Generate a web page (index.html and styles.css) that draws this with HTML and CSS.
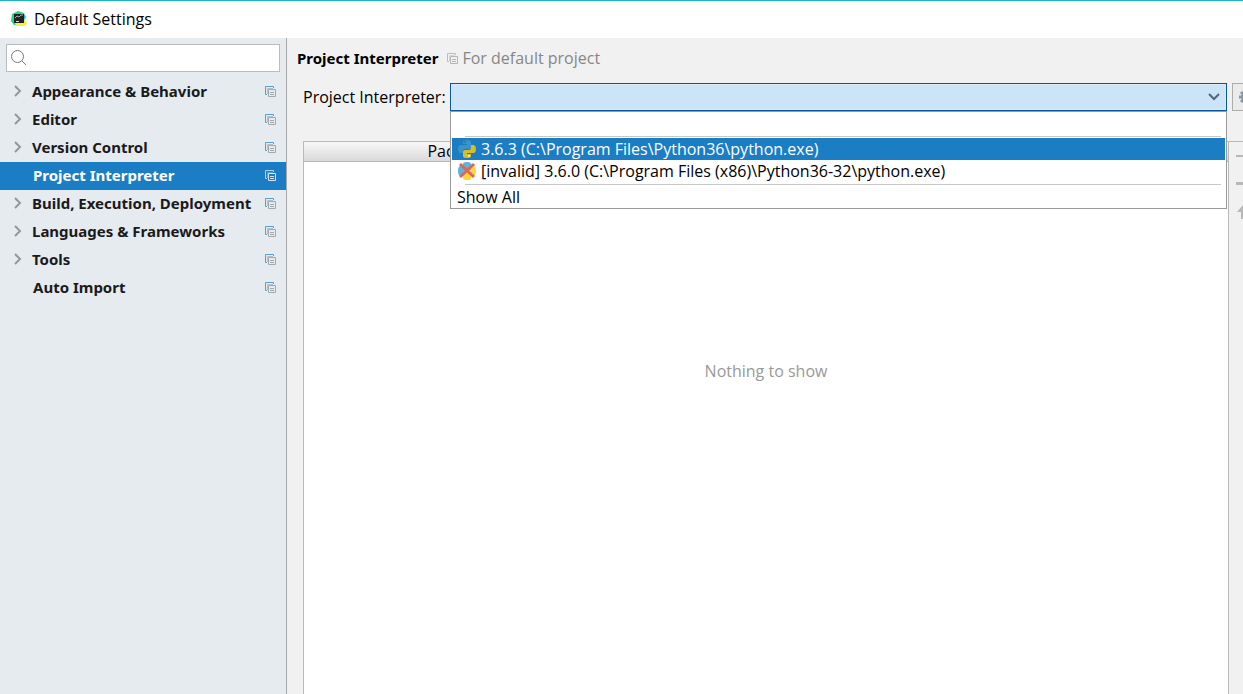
FILE: index.html
```html
<!DOCTYPE html>
<html lang="en">
<head>
<meta charset="utf-8">
<title>Default Settings</title>
<link rel="stylesheet" href="styles.css">
</head>
<body>
<svg class="defs" aria-hidden="true">
  <symbol id="copy" viewBox="0 0 11 11">
    <path class="copy-back" d="M2 8.5H.5V.5h8V2"/>
    <path class="copy-mid" d="M2.5 8V2.5H8"/>
    <path class="copy-front" d="M3.5 3.5h7v7h-7zM5 6.5h4M5 8.5h4"/>
  </symbol>
  <symbol id="chevron" viewBox="0 0 8 12"><path d="M1 1l5 5-5 5" fill="none" stroke="#95989a" stroke-width="2"/></symbol>
</svg>
<header class="titlebar">
  <svg class="app-icon" viewBox="0 0 16 16">
    <path d="M1 3l6-3 6 2 1 4-4 9-7-1-3-4z" fill="#24d48a"/>
    <path d="M12 3l3 3-1 3 2 4-3 2H5l-1-3 8-3z" fill="#f5ee45"/>
    <path d="M13 3l2 3-2 3z" fill="#20b9d9"/>
    <path d="M3 3h10v9H3z" fill="#222"/>
    <path d="M4 7l2-2 2 1 2-2h2" fill="none" stroke="#aaa"/><path d="M5 10.5h3" stroke="#ddd"/>
  </svg>
  <h1 class="window-title">Default Settings</h1>
</header>
<div class="body">
  <aside class="sidebar">
    <div class="search">
      <svg class="search-icon" viewBox="0 0 16 16"><circle cx="6.5" cy="6.5" r="6" /><path d="M11 11l4 4"/></svg>
      <input class="search-input" type="text" aria-label="Search settings">
    </div>
    <nav class="tree">
      <button class="row"><svg class="arrow"><use href="#chevron"/></svg><span class="name">Appearance &amp; Behavior</span><svg class="copy"><use href="#copy"/></svg></button>
      <button class="row"><svg class="arrow"><use href="#chevron"/></svg><span class="name">Editor</span><svg class="copy"><use href="#copy"/></svg></button>
      <button class="row"><svg class="arrow"><use href="#chevron"/></svg><span class="name">Version Control</span><svg class="copy"><use href="#copy"/></svg></button>
      <button class="row leaf selected"><span class="name">Project Interpreter</span><svg class="copy"><use href="#copy"/></svg></button>
      <button class="row"><svg class="arrow"><use href="#chevron"/></svg><span class="name">Build, Execution, Deployment</span><svg class="copy"><use href="#copy"/></svg></button>
      <button class="row"><svg class="arrow"><use href="#chevron"/></svg><span class="name">Languages &amp; Frameworks</span><svg class="copy"><use href="#copy"/></svg></button>
      <button class="row"><svg class="arrow"><use href="#chevron"/></svg><span class="name">Tools</span><svg class="copy"><use href="#copy"/></svg></button>
      <button class="row leaf"><span class="name">Auto Import</span><svg class="copy"><use href="#copy"/></svg></button>
    </nav>
  </aside>
  <main class="main">
    <div class="heading">
      <h2 class="page-title">Project Interpreter</h2>
      <svg class="copy faded"><use href="#copy"/></svg>
      <span class="scope">For default project</span>
    </div>
    <div class="field">
      <label class="label" for="interpreter">Project Interpreter:</label>
      <div class="combo">
        <select class="select" id="interpreter"><option selected></option></select>
        <svg class="combo-arrow" viewBox="0 0 12 8"><path d="M1 1l5 5 5-5"/></svg>
        <div class="popup">
          <button class="option blank" aria-label="No interpreter"></button>
          <hr class="line">
          <button class="option active">
            <svg class="py" viewBox="0 0 18 18">
              <path d="M5 4V2q0-2 4-2t4 2v5q0 2-2 2H7q-2 0-2 3v1H2q-2-1-2-4t2-4h7V4z" fill="#3b92c4"/>
              <path d="M13 14v2q0 2-4 2t-4-2v-4q0-2 2-2h4q2 0 2-3V5h3q2 1 2 4t-2 4H9v1z" fill="#d5bd2c"/>
              <circle cx="7" cy="2" r="1" fill="#1b7dc4"/><circle cx="11" cy="16" r="1" fill="#fff0a0"/>
            </svg>
            <span>3.6.3 (C:\Program Files\Python36\python.exe)</span>
          </button>
          <button class="option">
            <svg class="py" viewBox="0 0 18 18">
              <path d="M5 4V2q0-2 4-2t4 2v5q0 2-2 2H7q-2 0-2 3v2H2q-2-1-2-5t2-5z" fill="#5eb3de"/>
              <path d="M13 14v2q0 2-4 2t-4-2v-4q0-2 2-2h4q2 0 2-3V4h3q2 1 2 5t-2 5z" fill="#ffd636"/>
              <path d="M2 2l14 13M16 2L2 15" stroke="#df6655" stroke-width="3"/>
            </svg>
            <span>[invalid] 3.6.0 (C:\Program Files (x86)\Python36-32\python.exe)</span>
          </button>
          <hr class="line">
          <button class="option all">Show All</button>
        </div>
      </div>
      <div class="gear-slot">
        <button class="gear" aria-label="Interpreter options"><svg viewBox="0 0 14 14"><path d="M7 0v14M0 7h14M2 2l10 10M12 2L2 12" stroke="#8799a4" stroke-width="3"/><circle cx="7" cy="7" r="3.5" fill="#f0f0f0" stroke="#8799a4" stroke-width="3"/></svg></button>
      </div>
    </div>
    <div class="packages">
      <div class="panel">
        <table class="table">
          <thead><tr><th>Package</th><th></th><th></th></tr></thead>
        </table>
        <p class="empty">Nothing to show</p>
      </div>
      <div class="tools">
        <button class="tool" aria-label="Install"><svg viewBox="0 0 14 14"><path d="M0 7h14M8 0v14" stroke-width="2"/></svg></button>
        <button class="tool" aria-label="Uninstall"><svg viewBox="0 0 14 14"><path d="M0 6.5h14" stroke-width="3"/></svg></button>
        <button class="tool" aria-label="Upgrade"><svg viewBox="0 0 14 14"><path d="M7 0l6 7h-4v7H5V7H1z" fill="#b8b8b8" stroke="none"/></svg></button>
      </div>
    </div>
  </main>
</div>
</body>
</html>
```
FILE: styles.css
```css
* { box-sizing: border-box; }
body {
  margin: 0;
  height: 100vh;
  display: flex;
  flex-direction: column;
  overflow: hidden;
  background: #f1f1f1;
  color: #000;
  font: 16px/22px "Open Sans", "Noto Sans", sans-serif;
}
button { font: inherit; color: inherit; border: 0; background: none; padding: 0; text-align: left; }
.defs { display: none; }
h1, h2, p { margin: 0; font-size: inherit; font-weight: 400; }

.titlebar {
  height: 38px;
  flex: none;
  display: flex;
  align-items: center;
  gap: 7px;
  padding: 0 0 2px 11px;
  border-top: 1px solid #19b5bf;
  background: #fff;
}
.app-icon { width: 16px; height: 16px; }

.body { flex: 1; display: flex; min-height: 0; }
.sidebar {
  width: 287px;
  flex: none;
  padding-top: 6px;
  border-right: 1px solid #a7a7a7;
  background: #e6ebf0;
}
.search {
  display: flex;
  align-items: center;
  gap: 4px;
  height: 28px;
  margin: 0 6px 6px;
  padding: 0 4px;
  border: 1px solid #b9bdc0;
  background: #fff;
}
.search-icon { width: 16px; height: 16px; fill: none; stroke: #777; }
.search-input { flex: 1; min-width: 0; border: 0; outline: 0; font: inherit; }
.row {
  display: flex;
  align-items: center;
  width: 100%;
  height: 28px;
  padding: 0 10px 2px 14px;
  color: #1a1a1a;
  font-family: "Noto Sans", "Open Sans", sans-serif;
  font-size: 15px;
  font-weight: 700;
}
.leaf { padding-left: 33px; }
.arrow { width: 8px; height: 12px; margin-right: 10px; }
.name { flex: 1; white-space: nowrap; }
.selected { background: #1b7dc4; color: #fff; }
.copy { width: 11px; height: 11px; flex: none; }
.copy-back, .copy-mid, .copy-front { fill: none; }
.copy-back { stroke: var(--copy-back, #5b9dc7); }
.copy-mid { stroke: var(--copy-mid, #b5bfc6); }
.copy-front { stroke: var(--copy-front, #a5a8aa); }
.selected .copy { --copy-back: #a9d3ef; --copy-mid: #5aa5db; --copy-front: #d5e6f2; }
.faded { --copy-back: #9cc6df; --copy-mid: #d2d6d8; --copy-front: #b5b5b5; }

.main { flex: 1; min-width: 0; display: flex; flex-direction: column; padding-top: 9px; }
.heading { display: flex; align-items: center; gap: 4px; padding-left: 10px; margin-bottom: 14px; }
.page-title { font-family: "Noto Sans", "Open Sans", sans-serif; font-size: 15px; font-weight: 700; margin-right: 5px; }
.scope { color: #878787; }
.field { display: flex; align-items: center; padding-left: 16px; }
.label { width: 147px; flex: none; white-space: nowrap; }
.combo { position: relative; flex: 1; height: 28px; }
.select {
  display: block;
  appearance: none;
  width: 100%;
  height: 28px;
  border: 1px solid #0a5499;
  border-radius: 0;
  outline: 0;
  background: #cce4f7;
  box-shadow: inset 0 0 0 1px #dcebf8;
  font: inherit;
}
.combo-arrow { position: absolute; top: 10px; right: 7px; width: 12px; height: 8px; fill: none; stroke: #53687a; stroke-width: 2; pointer-events: none; }
.popup {
  position: absolute;
  z-index: 1;
  top: 28px;
  left: 0;
  right: 0;
  padding: 0 1px;
  border: 1px solid #9a9a9a;
  background: #fff;
}
.option { display: flex; align-items: center; gap: 5px; width: 100%; height: 22px; padding-left: 6px; white-space: nowrap; }
.blank { height: 24px; }
.active { background: #1b7dc4; color: #fff; }
.all { padding-left: 5px; }
.line { height: 1px; margin: 0 4px 1px 13px; border: 0; background: #c8c8c8; }
.option + .line { margin-top: 2px; }
.blank + .line { margin-top: 0; }
.py { width: 18px; height: 18px; }
.gear-slot { width: 16px; flex: none; padding-left: 5px; overflow: hidden; }
.gear { display: flex; align-items: center; width: 28px; height: 28px; padding-left: 6px; border: 1px solid #adadad; background: #ebebeb; }
.gear svg { width: 14px; height: 14px; flex: none; }

.packages { flex: 1; display: flex; margin: 30px 0 0 16px; min-height: 0; }
.panel { flex: 1; border: solid #bababa; border-width: 1px 1px 0; background: #fff; }
.table { width: 100%; table-layout: fixed; border-collapse: collapse; line-height: 19px; }
.table th { height: 19px; padding: 0; font-weight: 400; border-bottom: 1px solid #b8b8b8; background: linear-gradient(#f7f7f7, #dadada); }
.empty { margin-top: 198px; color: #999; text-align: center; }
.tools { width: 14px; flex: none; padding-left: 7px; border-top: 1px solid #bababa; overflow: hidden; }
.tool { display: flex; align-items: center; width: 14px; height: 28px; }
.tool svg { width: 14px; height: 14px; flex: none; fill: none; stroke: #b8b8b8; }
```
